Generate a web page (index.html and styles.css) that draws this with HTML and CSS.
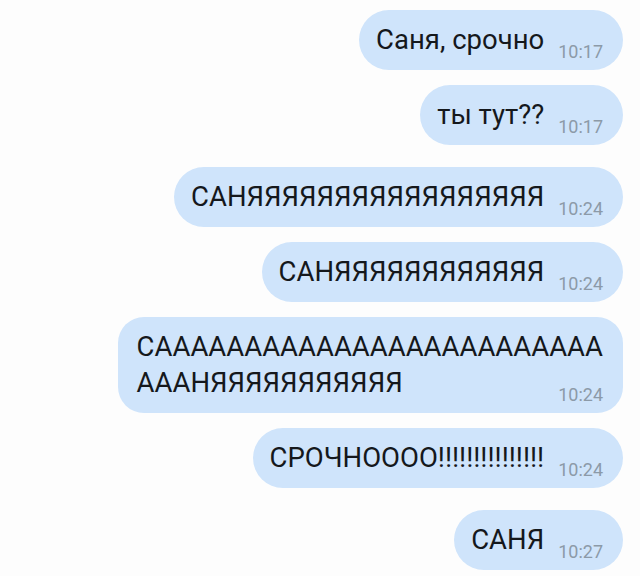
FILE: index.html
```html
<!DOCTYPE html>
<html lang="ru">
<head>
    <meta charset="UTF-8">
    <meta name="viewport" content="width=device-width, initial-scale=1.0">
    <title>Чат</title>
    <link rel="stylesheet" href="styles.css">
</head>
<body>

<div class="chat">
    <div class="msg">
        <span class="text">Саня, срочно</span>
        <span class="time">10:17</span>
    </div>
    <div class="msg">
        <span class="text">ты тут??</span>
        <span class="time">10:17</span>
    </div>
    <div class="msg group-start">
        <span class="text">САНЯЯЯЯЯЯЯЯЯЯЯЯЯЯЯЯЯ</span>
        <span class="time">10:24</span>
    </div>
    <div class="msg">
        <span class="text">САНЯЯЯЯЯЯЯЯЯЯЯЯ</span>
        <span class="time">10:24</span>
    </div>
    <div class="msg multi">
        <span class="text">СААААААААААААААААААААААААА<br>АААНЯЯЯЯЯЯЯЯЯЯЯ</span>
        <span class="time">10:24</span>
    </div>
    <div class="msg">
        <span class="text">СРОЧНОООО!!!!!!!!!!!!!!!</span>
        <span class="time">10:24</span>
    </div>
    <div class="msg group-start">
        <span class="text">САНЯ</span>
        <span class="time">10:27</span>
    </div>
</div>

</body>
</html>
```

FILE: styles.css
```css
body {
    margin: 0;
    background-color: #fdfdfd;
    font-family: Roboto, "Noto Sans", sans-serif;
}
.chat {
    display: flex;
    flex-direction: column;
    align-items: flex-end;
    gap: 15px;
    padding: 10px 17px 0 0;
}
.msg {
    display: flex;
    align-items: flex-end;
    background-color: #cfe4fb;
    border-radius: 30px;
    padding: 12px 20px 12px 17px;
}
.msg.group-start {
    margin-top: 7px;
}
/* long message: time sits under the text, in the last line */
.msg.multi {
    display: grid;
    border-radius: 26px;
    padding-left: 19px;
}
.msg.multi .text,
.msg.multi .time {
    grid-area: 1 / 1;
}
.msg.multi .time {
    justify-self: end;
    align-self: end;
}
.text {
    font-size: 27.5px;
    line-height: 36px;
    color: #15181c;
}
.time {
    font-size: 18px;
    line-height: 18px;
    color: #8c9aa8;
    margin-left: 14px;
    margin-bottom: -3px;
}
```
